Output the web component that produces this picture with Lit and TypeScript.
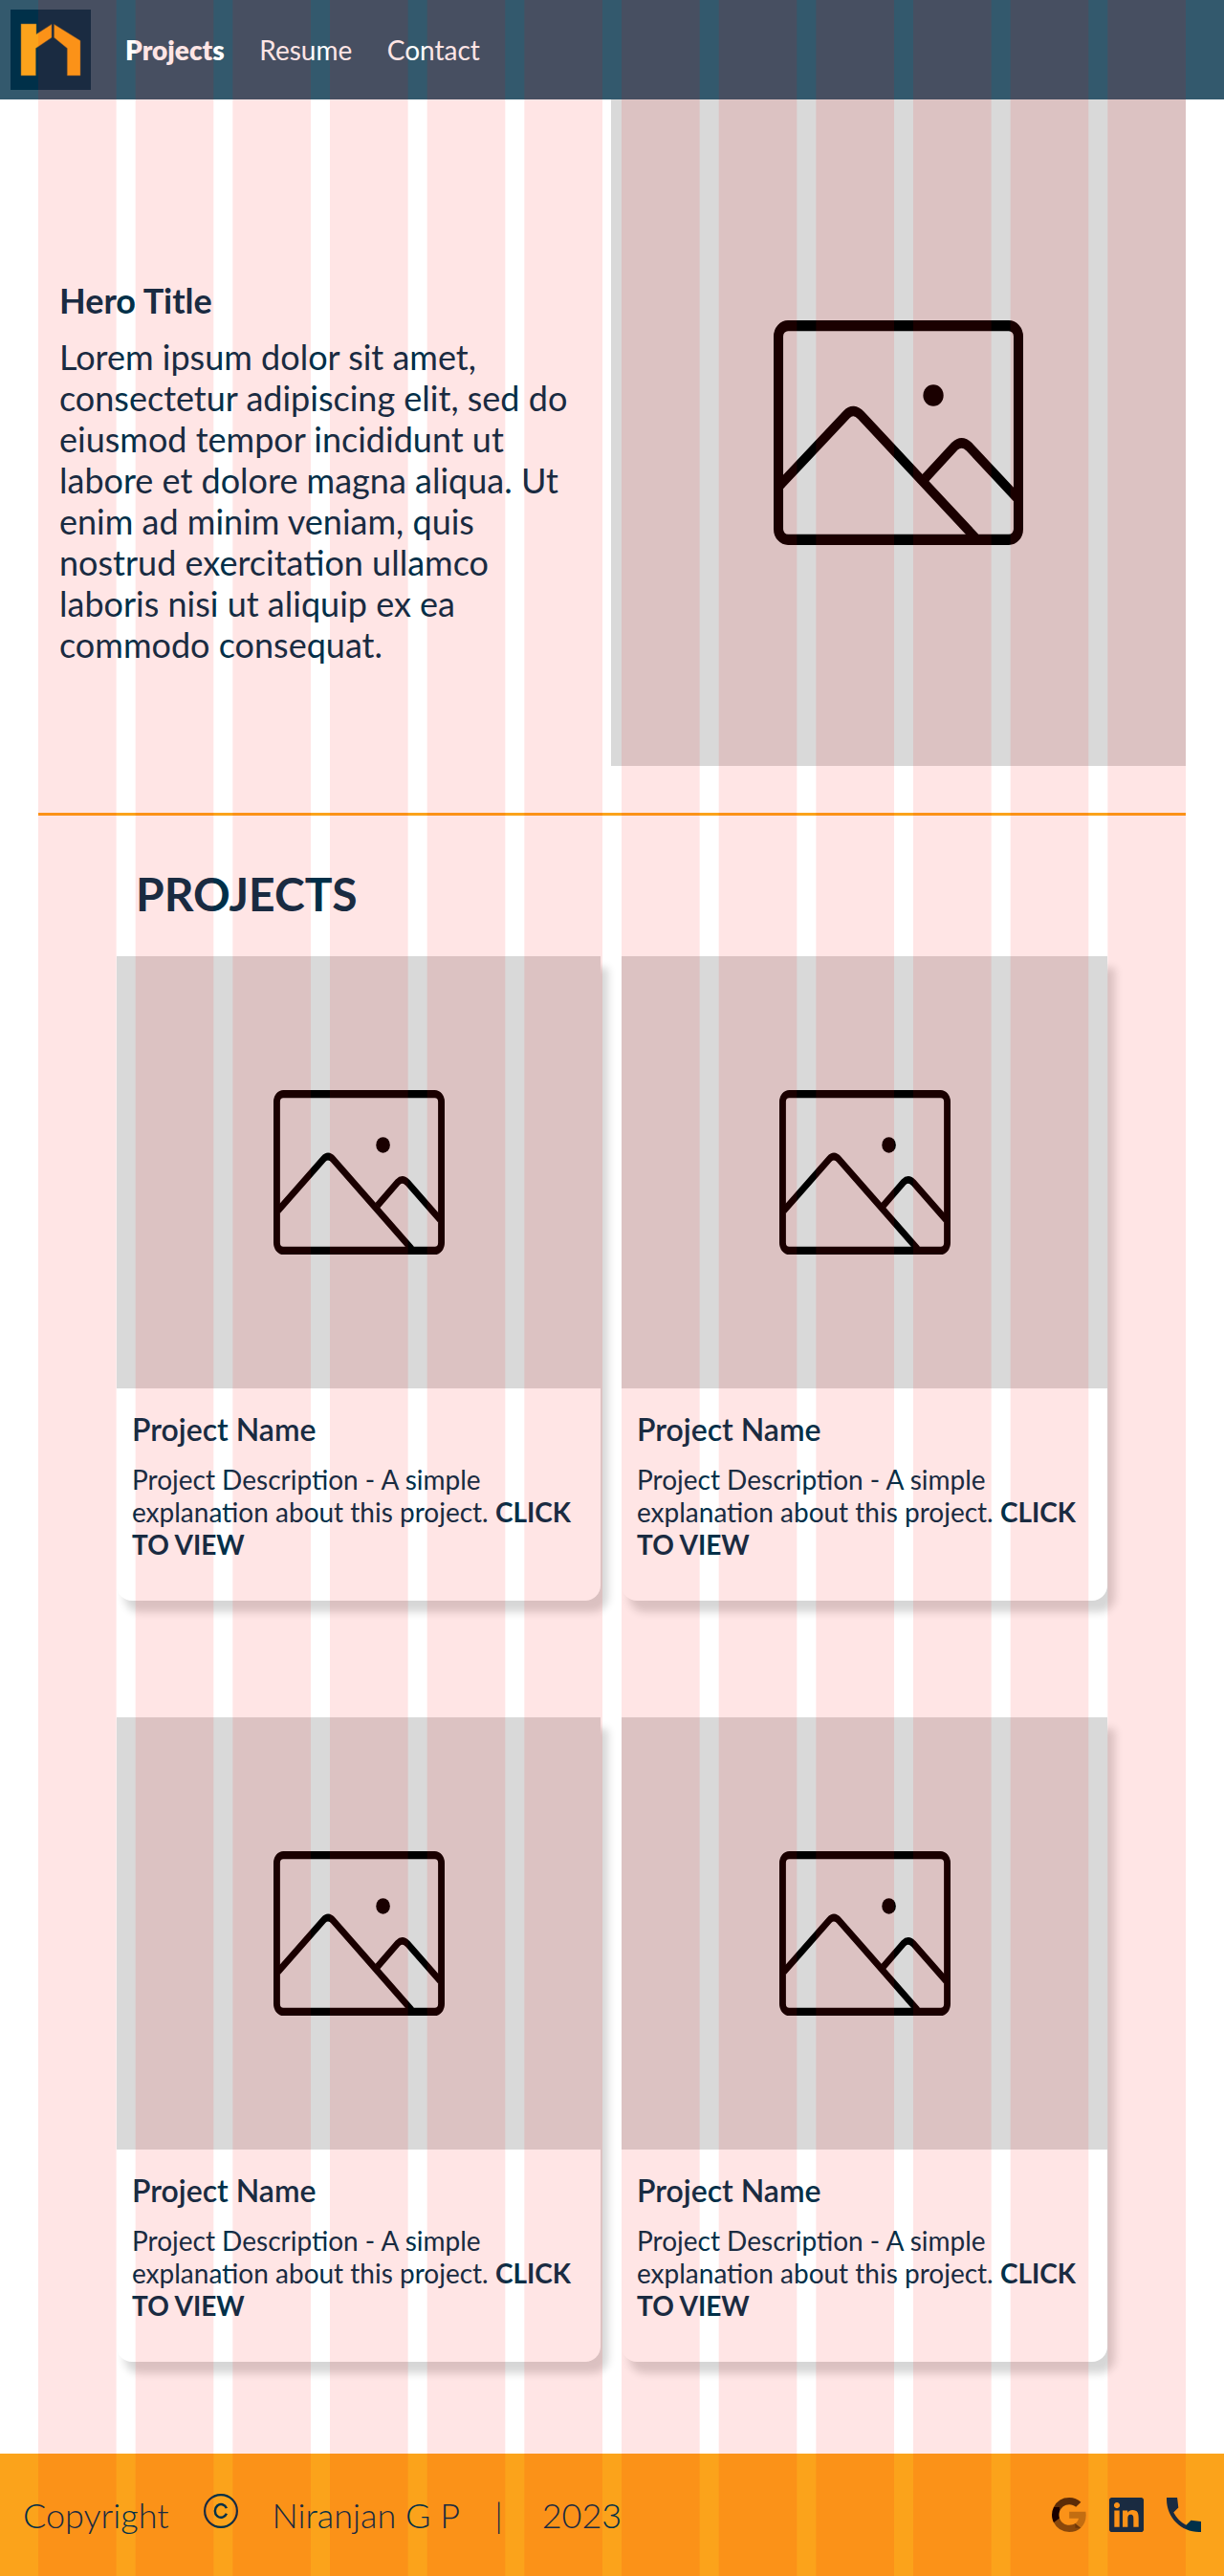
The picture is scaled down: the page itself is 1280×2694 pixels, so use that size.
import { LitElement, html, css, svg } from "lit";
import { customElement, property } from "lit/decorators.js";

const COLUMN_COUNT = 12;
const MARGIN = 40;
const GUTTER = 20;
const COLUMN_WIDTH = (1280 - 2 * MARGIN - (COLUMN_COUNT - 1) * GUTTER) / COLUMN_COUNT;

/** Stretchable image placeholder glyph. */
@customElement("image-glyph")
class ImageGlyph extends LitElement {
  static styles = css`
    :host {
      display: block;
    }
    svg {
      display: block;
      width: 100%;
      height: 100%;
    }
    .line {
      fill: none;
      stroke: #000;
    }
    .thin {
      stroke-width: 0.93;
    }
  `;

  render() {
    return html`
      <svg viewBox="0 0 26 21" preserveAspectRatio="none">
        <rect class="line" x="0.5" y="0.5" width="25" height="20" rx="1" ry="1" />
        <path class="line thin" d="M0.7 15.38 L7.6 8.8 Q8.32 8.14 9.12 8.9 L21 20.3" />
        <path class="line thin" d="M15.8 14.75 L18.87 11.76 Q19.6 11.14 20.37 11.82 L25.3 16.55" />
        <ellipse cx="16.64" cy="7.01" rx="1.06" ry="1.01" />
      </svg>
    `;
  }
}

@customElement("project-card")
class ProjectCard extends LitElement {
  @property() name = "";
  @property() description = "";

  static styles = css`
    :host {
      display: block;
      height: 674px;
      border-radius: 0 0 16px 16px;
      box-shadow: 8px 12px 8px rgba(0, 0, 0, 0.16);
    }
    .picture {
      height: 452px;
      display: flex;
      align-items: center;
      justify-content: center;
      background: #d9d9d9;
    }
    image-glyph {
      width: 179px;
      height: 172px;
    }
    .body {
      padding: 24px 16px 0;
      display: flex;
      flex-direction: column;
      gap: 16px;
    }
    h3,
    p {
      margin: 0;
    }
    h3 {
      font-size: 32px;
      line-height: 38px;
      font-weight: 600;
    }
    p {
      font-size: 28px;
      line-height: 34px;
    }
    b {
      font-weight: 700;
    }
  `;

  render() {
    return html`
      <div class="picture"><image-glyph></image-glyph></div>
      <div class="body">
        <h3>${this.name}</h3>
        <p>${this.description} <b>CLICK TO VIEW</b></p>
      </div>
    `;
  }
}

@customElement("app-root")
class AppRoot extends LitElement {
  static styles = css`
    :host {
      display: block;
      position: relative;
      width: 1280px;
      height: 2694px;
      background: #fff;
      color: #003049;
      font-family: Lato, "Liberation Sans", sans-serif;
    }
    .page {
      display: flex;
      flex-direction: column;
      height: 100%;
    }
    .columns {
      position: absolute;
      inset: 0;
      width: 100%;
      height: 100%;
      pointer-events: none;
      fill: rgba(255, 0, 0, 0.1);
    }
    header {
      height: 104px;
      padding-left: 11px;
      display: flex;
      align-items: center;
      gap: 36px;
      background: rgba(0, 48, 73, 0.8);
    }
    .logo {
      display: block;
      width: 84px;
      height: 84px;
    }
    nav {
      display: flex;
      gap: 36.5px;
      font-size: 28px;
      line-height: 34px;
      color: #fff;
    }
    .current {
      font-weight: 800;
    }
    .hero {
      margin: 0 40px;
      height: 746px;
      display: grid;
      grid-template-columns: 599px 601px;
      align-items: start;
      box-sizing: border-box;
    }
    .intro {
      padding: 189px 22px 0;
      display: flex;
      flex-direction: column;
      gap: 16px;
      font-size: 36px;
      line-height: 43px;
    }
    h1,
    h2,
    p {
      margin: 0;
    }
    h1 {
      font-size: 36px;
      line-height: 43px;
      font-weight: 700;
    }
    .banner {
      height: 697px;
      display: flex;
      align-items: center;
      justify-content: center;
      background: #d9d9d9;
    }
    .banner image-glyph {
      width: 261px;
      height: 235px;
    }
    .rule {
      margin: 0 40px;
      height: 3px;
      background: #fba31b;
    }
    .projects {
      flex: 1;
      padding: 53px 122px 0;
    }
    h2 {
      padding-left: 20px;
      font-size: 48px;
      line-height: 58px;
      font-weight: 700;
    }
    .cards {
      margin-top: 36px;
      display: grid;
      grid-template-columns: 506px 508px;
      gap: 122px 22px;
    }
    footer {
      height: 128px;
      padding: 0 24px;
      display: flex;
      align-items: center;
      justify-content: space-between;
      background: #fba31b;
    }
    .legal {
      display: flex;
      align-items: center;
      gap: 36px;
      font-size: 36px;
      line-height: 43px;
      font-weight: 300;
    }
    .year {
      margin-left: 5px;
    }
    .mark {
      display: block;
      width: 36px;
      height: 36px;
      margin-bottom: 8px;
      fill: none;
      stroke: #003049;
    }
    .links {
      display: flex;
      gap: 24px;
    }
    .links svg {
      display: block;
      width: 36px;
      height: 36px;
      fill: #003049;
    }
  `;

  private cards = Array.from({ length: 4 }, () => ({
    name: "Project Name",
    description: "Project Description - A simple explanation about this project.",
  }));

  private renderLogo() {
    return html`
      <svg class="logo" viewBox="0 0 84 84">
        <rect width="84" height="84" fill="#003049" />
        <g fill="#fba31b" stroke="#8a6a2c" stroke-width="0.5">
          <path d="M11 15H27V25.7L43 15.4V29.3L26.4 40.5V69H11Z" />
          <path d="M45.6 15.4L73 32.5V69H59.3V40.5L45.6 29.3Z" />
        </g>
      </svg>
    `;
  }

  private renderLinks() {
    return html`
      <div class="links">
        <svg viewBox="0 0 17.8 18" preserveAspectRatio="none">
          <path fill-opacity="0.25" fill="#000" d="M17.64 9.2c0-.637-.057-1.251-.164-1.84H9v3.481h4.844c-.209 1.125-.843 2.078-1.796 2.717v2.258h2.908c1.702-1.567 2.684-3.874 2.684-6.615z" />
          <path fill-opacity="0.5" fill="#000" d="M9 18c2.43 0 4.467-.806 5.956-2.184l-2.908-2.258c-.806.54-1.837.86-3.048.86-2.344 0-4.328-1.584-5.036-3.711H.957v2.332A8.997 8.997 0 0 0 9 18z" />
          <path fill="#000" d="M3.964 10.707A5.41 5.41 0 0 1 3.682 9c0-.593.102-1.17.282-1.707V4.961H.957A8.996 8.996 0 0 0 0 9c0 1.452.348 2.827.957 4.039l3.007-2.332z" />
          <path fill-opacity="0.7" fill="#000" d="M9 3.58c1.321 0 2.508.454 3.44 1.345l2.582-2.58C13.463.891 11.426 0 9 0A8.997 8.997 0 0 0 .957 4.961l3.007 2.332C4.672 5.166 6.656 3.58 9 3.58z" />
        </svg>
        <svg viewBox="0 0 24 24">
          <path d="M20.447 20.452h-3.554v-5.569c0-1.328-.027-3.037-1.852-3.037-1.853 0-2.136 1.445-2.136 2.939v5.667H9.351V9h3.414v1.561h.046c.477-.9 1.637-1.85 3.37-1.85 3.601 0 4.267 2.37 4.267 5.455v6.286zM5.337 7.433c-1.144 0-2.063-.926-2.063-2.065 0-1.138.92-2.063 2.063-2.063 1.14 0 2.064.925 2.064 2.063 0 1.139-.925 2.065-2.064 2.065zm1.782 13.019H3.555V9h3.564v11.452zM22.225 0H1.771C.792 0 0 .774 0 1.729v20.542C0 23.227.792 24 1.771 24h20.451C23.2 24 24 23.227 24 22.271V1.729C24 .774 23.2 0 22.222 0h.003z" />
        </svg>
        <svg viewBox="3 3 18 18">
          <path d="M21 15.46l-5.27-.61-2.52 2.52c-2.83-1.44-5.15-3.75-6.59-6.59l2.53-2.53L8.54 3H3.03C2.45 13.18 10.82 21.55 21 20.97v-5.51z" />
        </svg>
      </div>
    `;
  }

  private renderColumns() {
    return html`
      <svg class="columns" viewBox="0 0 1280 2694">
        ${Array.from(
          { length: COLUMN_COUNT },
          (_, i) => svg`<rect x=${MARGIN + i * (COLUMN_WIDTH + GUTTER)} y="0" width=${COLUMN_WIDTH} height="2694" />`,
        )}
      </svg>
    `;
  }

  render() {
    return html`
      <div class="page">
        <header>
          ${this.renderLogo()}
          <nav>
            <span class="current">Projects</span>
            <span>Resume</span>
            <span>Contact</span>
          </nav>
        </header>
        <section class="hero">
          <div class="intro">
            <h1>Hero Title</h1>
            <p>
              Lorem ipsum dolor sit amet, consectetur adipiscing elit, sed do eiusmod tempor incididunt ut labore et
              dolore magna aliqua. Ut enim ad minim veniam, quis nostrud exercitation ullamco laboris nisi ut aliquip ex
              ea commodo consequat.
            </p>
          </div>
          <div class="banner"><image-glyph></image-glyph></div>
        </section>
        <div class="rule"></div>
        <section class="projects">
          <h2>PROJECTS</h2>
          <div class="cards">
            ${this.cards.map(
              (c) => html`<project-card .name=${c.name} .description=${c.description}></project-card>`,
            )}
          </div>
        </section>
        <footer>
          <div class="legal">
            <span>Copyright</span>
            <svg class="mark" viewBox="0 0 36 36">
              <circle cx="18" cy="18" r="16.9" stroke-width="2.2" />
              <path d="M23.9 15.1A6.3 6.9 0 1 0 23.9 20.7" stroke-width="2.5" />
            </svg>
            <span>Niranjan G P</span>
            <span>|</span>
            <span class="year">2023</span>
          </div>
          ${this.renderLinks()}
        </footer>
      </div>
      ${this.renderColumns()}
    `;
  }
}
